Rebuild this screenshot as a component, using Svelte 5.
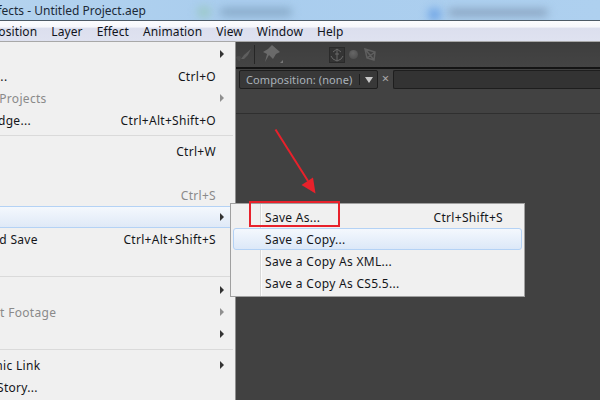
<script>
  const rows = [
    { label: 'New', arrow: true },
    { label: 'Open Project...', key: 'Ctrl+O' },
    { label: 'Open Recent Projects', arrow: true, off: true },
    { label: 'Browse in Bridge...', key: 'Ctrl+Alt+Shift+O' },
    { sep: true },
    { label: 'Close', key: 'Ctrl+W' },
    { label: 'Close Project' },
    { label: 'Save', key: 'Ctrl+S', off: true },
    { label: 'Save As', arrow: true, hot: true },
    { label: 'Increment and Save', key: 'Ctrl+Alt+Shift+S' },
    { label: 'Revert', off: true },
    { sep: true, short: true },
    { label: 'Import', arrow: true },
    { label: 'Import Recent Footage', arrow: true, off: true },
    { label: 'Export', arrow: true },
    { sep: true },
    { label: 'Adobe Dynamic Link', arrow: true },
    { label: 'Go to Adobe Story...' }
  ];
  const subs = [
    { label: 'Save As...', key: 'Ctrl+Shift+S' },
    { label: 'Save a Copy...', hot: true },
    { label: 'Save a Copy As XML...' },
    { label: 'Save a Copy As CS5.5...' }
  ];
  const menus = ['File', 'Edit', 'Composition', 'Layer', 'Effect', 'Animation', 'View', 'Window', 'Help'];
</script>

<div class="screen">
  <header class="title">
    <span class="title-text">Adobe After Effects - Untitled Project.aep</span>
    <i class="blob b1"></i><i class="blob b2"></i><i class="blob b3"></i><i class="blob b4"></i>
  </header>
  <nav class="menubar">
    {#each menus as m}<span>{m}</span>{/each}
  </nav>
  <div class="work">
    <div class="menu">
      {#each rows as r}
        {#if r.sep}
          <div class="sep" class:short={r.short}></div>
        {:else}
          <div class="row" class:off={r.off} class:hot={r.hot}>
            <span class="label">{r.label}</span>
            {#if r.key}<span class="key">{r.key}</span>{/if}
            {#if r.arrow}<i class="arrow"></i>{/if}
          </div>
        {/if}
      {/each}
    </div>
    <div class="panel">
      <div class="tools">
        <svg class="tool-svg" width="92" height="25" viewBox="0 0 92 25">
          <path d="M5 17 L8 13 L15 7 L12 13 L8 17 Z" fill="#5e5e5e" />
          <path d="M0 15 q3 -2 5 0 l-1 4 q-3 0 -4 -4z" fill="#4c4c4c" />
          <path d="M18.500 3 V22" stroke="#262626" />
          <path d="M36 3 L44 10 L40 12 L37 17 L33 13 L29 20 L31 12 L27 10 L32 7 Z" fill="#6a6a6a" />
          <path d="M44 21 l3 -3 v3z" fill="#777" />
        </svg>
        <div class="anchor">
          <svg width="14" height="14" viewBox="0 0 14 14" fill="none" stroke="#686868">
            <path d="M7 1 V13 M3 4 L7 1 L11 4 M1 8 L3 11 L7 13 L11 11 L13 8 M5 6 H9" />
          </svg>
        </div>
        <i class="dot"></i>
        <svg class="cube" width="12" height="13" viewBox="0 0 12 13" fill="none" stroke="#5f5f5f" stroke-width="1.500">
          <path d="M1 1 L11 4 L10 12 L3 10 Z M1 1 L10 12 M11 4 L3 10" />
        </svg>
      </div>
      <div class="tabs">
        <div class="tab">
          <span class="tab-name">Composition: (none)</span>
          <i class="tab-div"></i>
          <i class="tab-tri"></i>
        </div>
        <span class="close">×</span>
        <div class="tab-rest"></div>
      </div>
      <div class="bar"></div>
      <div class="canvas"></div>
    </div>
  </div>

  <div class="sub">
    {#each subs as s}
      <div class="sub-row" class:hot={s.hot}>
        <span>{s.label}</span>
        {#if s.key}<span>{s.key}</span>{/if}
      </div>
    {/each}
  </div>
  <div class="mark"></div>
  <svg class="pointer" width="600" height="400" viewBox="0 0 600 400">
    <path d="M275.500 129.500 L308 181" stroke="#e8212b" stroke-width="2" fill="none" />
    <path d="M315.500 193.500 L301.500 185 L313 177.500 Z" fill="#e8212b" />
  </svg>
</div>

<style>
  :global(body) {
    margin: 0;
  }
  .screen {
    position: relative;
    width: 600px;
    height: 400px;
    overflow: hidden;
    display: flex;
    flex-direction: column;
    font-family: "Noto Sans", "Open Sans", sans-serif;
    font-size: 12px;
    letter-spacing: 0.300px;
    color: #1a1a1a;
  }
  .title {
    position: relative;
    height: 21px;
    flex: none;
    overflow: hidden;
    background: linear-gradient(90deg, #b4d3ee 0%, #a9cdee 40%, #aed0ef 100%);
    border-bottom: 1px solid #4d5a66;
    box-sizing: border-box;
    display: flex;
    align-items: center;
  }
  .title-text {
    margin-left: -84px;
    font-size: 12px;
    letter-spacing: 0;
    white-space: nowrap;
    color: #1c2a38;
    position: relative;
    z-index: 1;
  }
  .blob {
    position: absolute;
    filter: blur(4px);
    border-radius: 6px;
  }
  .b1 { left: 197px; top: 6px; width: 14px; height: 12px; background: #9cc9c8; }
  .b2 { left: 220px; top: 8px; width: 72px; height: 8px; background: #86a8c6; }
  .b3 { left: 428px; top: 8px; width: 13px; height: 13px; background: #6fa5e6; }
  .b4 { left: 448px; top: 9px; width: 100px; height: 7px; background: #86a0bc; }
  .menubar {
    height: 21px;
    flex: none;
    box-sizing: border-box;
    border-bottom: 1px solid #a8a8a8;
    background: linear-gradient(#fbfcfe 0%, #f6f7fb 30%, #dcdfee 36%, #dfe2f0 100%);
    display: flex;
    align-items: center;
    gap: 14px;
    letter-spacing: 0.100px;
    white-space: nowrap;
    color: #10141c;
  }
  .menubar span:first-child {
    margin-left: -105px;
  }
  .work {
    flex: 1;
    min-height: 0;
    display: flex;
  }
  .menu {
    width: 236px;
    flex: none;
    box-sizing: border-box;
    background: #f0f0f0;
    border-right: 1px solid #8f8f8f;
    padding-top: 1px;
    overflow: hidden;
  }
  .row {
    height: 22px;
    box-sizing: border-box;
    display: flex;
    align-items: center;
    position: relative;
    color: #14161a;
    white-space: nowrap;
  }
  .row.off {
    color: #8a8a8a;
  }
  .row.hot {
    background: linear-gradient(#f4f8fd, #dfe9f7);
    border-top: 1px solid #b4d2f5;
    border-bottom: 1px solid #b4d2f5;
  }
  .label {
    margin-left: -80px;
  }
  .key {
    position: absolute;
    right: 19px;
  }
  .arrow {
    position: absolute;
    left: 220px;
    top: 7px;
    width: 0;
    height: 0;
    border-left: 4px solid #333;
    border-top: 4px solid transparent;
    border-bottom: 4px solid transparent;
  }
  .row.off .arrow {
    border-left-color: #8f8f8f;
  }
  .row.hot .arrow {
    top: 6px;
  }
  .sep {
    height: 9px;
    box-sizing: border-box;
    padding-top: 4px;
  }
  .sep::after {
    content: "";
    display: block;
    height: 1px;
    background: #dadada;
    margin-right: 2px;
  }
  .sep.short {
    height: 7px;
  }
  .panel {
    flex: 1;
    min-width: 0;
    display: flex;
    flex-direction: column;
    background: #424242;
  }
  .tools {
    height: 27px;
    flex: none;
    box-sizing: border-box;
    display: flex;
    align-items: center;
    background: linear-gradient(#3e3e3e, #444);
    border-bottom: 2px solid #141414;
  }
  .tool-svg {
    flex: none;
  }
  .anchor {
    margin-left: 2px;
    width: 14px;
    height: 14px;
    background: #343434;
    outline: 1px solid #2a2a2a;
    display: flex;
  }
  .dot {
    margin-left: 5px;
    width: 9px;
    height: 9px;
    border-radius: 50%;
    background: radial-gradient(circle at 45% 35%, #666, #4a4a4a);
  }
  .cube {
    margin-left: 6px;
  }
  .tabs {
    height: 20px;
    flex: none;
    display: flex;
    align-items: stretch;
    padding: 1px 0 0 3px;
    box-sizing: border-box;
    background: #424242;
  }
  .tab {
    width: 139px;
    box-sizing: border-box;
    border: 1px solid #1e1e1e;
    border-radius: 2px;
    background: #383838;
    display: flex;
    align-items: center;
    padding-left: 6px;
    position: relative;
  }
  .tab-name {
    color: #aab2ba;
    font-size: 11px;
    letter-spacing: 0.100px;
    white-space: nowrap;
  }
  .tab-div {
    position: absolute;
    left: 119px;
    top: 3px;
    bottom: 3px;
    width: 1px;
    background: #1e1e1e;
  }
  .tab-tri {
    position: absolute;
    left: 125px;
    top: 6px;
    width: 0;
    height: 0;
    border-top: 6px solid #c8c8c8;
    border-left: 4px solid transparent;
    border-right: 4px solid transparent;
  }
  .close {
    width: 15px;
    flex: none;
    text-align: center;
    color: #a8a8a8;
    font-size: 13px;
    line-height: 17px;
  }
  .tab-rest {
    flex: 1;
    border: 1px solid #1e1e1e;
    border-right: none;
    border-radius: 2px 0 0 2px;
    background: #333;
  }
  .bar {
    height: 25px;
    flex: none;
    box-sizing: border-box;
    background: #424242;
    border-bottom: 1px solid #2f2f2f;
  }
  .canvas {
    flex: 1;
    background: #414141;
  }
  .sub {
    position: absolute;
    left: 230px;
    top: 203px;
    width: 295px;
    height: 94px;
    box-sizing: border-box;
    border: 1px solid #a0a0a0;
    background: linear-gradient(90deg, #f0f0f0 0 29px, #d8d8d8 29px 30px, #fcfcfc 30px 31px, #f0f0f0 31px);
    padding: 2px;
  }
  .sub-row {
    height: 22px;
    box-sizing: border-box;
    display: flex;
    align-items: center;
    justify-content: space-between;
    padding: 0 19px 0 32px;
    color: #14161a;
    white-space: nowrap;
  }
  .sub-row.hot {
    background: linear-gradient(#f4f8fd, #dce8f8);
    border: 1px solid #b4d2f5;
    border-radius: 3px;
    padding-left: 31px;
  }
  .mark {
    position: absolute;
    left: 249px;
    top: 201px;
    width: 91px;
    height: 26px;
    box-sizing: border-box;
    border: 2px solid #e8212b;
  }
  .pointer {
    position: absolute;
    left: 0;
    top: 0;
    pointer-events: none;
  }
</style>
